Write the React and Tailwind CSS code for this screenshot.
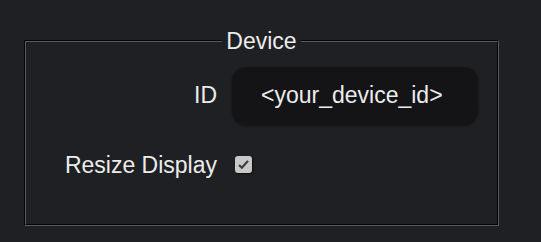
import React from 'react';

const App = () => {
    return (
        <div className="min-h-[242px] w-full bg-[#1f2023] pt-[24px] pl-[24px] font-['Liberation_Sans',Arial,sans-serif] text-[23px] text-[#ececec]">
            <fieldset className="w-[475px] border-2 border-[#5a5a5a] [border-style:groove] pt-[8px] pb-[42px]">
                <legend className="mx-auto px-[4px] leading-normal">Device</legend>
                <div className="grid grid-cols-[191px_246px] items-center gap-x-[15px] gap-y-[23px]">
                    <label className="text-right leading-normal">ID</label>
                    <div className="flex h-[58px] items-center rounded-[14px] bg-[#141416] pl-[29px] shadow-[0_1px_3px_rgba(0,0,0,0.4)]">
                        &lt;your_device_id&gt;
                    </div>

                    <label className="text-right leading-normal">Resize Display</label>
                    <div className="flex items-center pl-[3px]">
                        <span className="flex h-[17px] w-[17px] items-center justify-center rounded-[3px] bg-[#c8c8c8] shadow-[1px_1px_2px_rgba(0,0,0,0.6)]">
                            <svg width="13" height="13" viewBox="0 0 16 16">
                                <path d="M2.5 8.5 L6 12 L13.5 3.5" fill="none" stroke="#3a3a3a" strokeWidth="2.6" />
                            </svg>
                        </span>
                    </div>
                </div>
            </fieldset>
        </div>
    );
};

export default App;
